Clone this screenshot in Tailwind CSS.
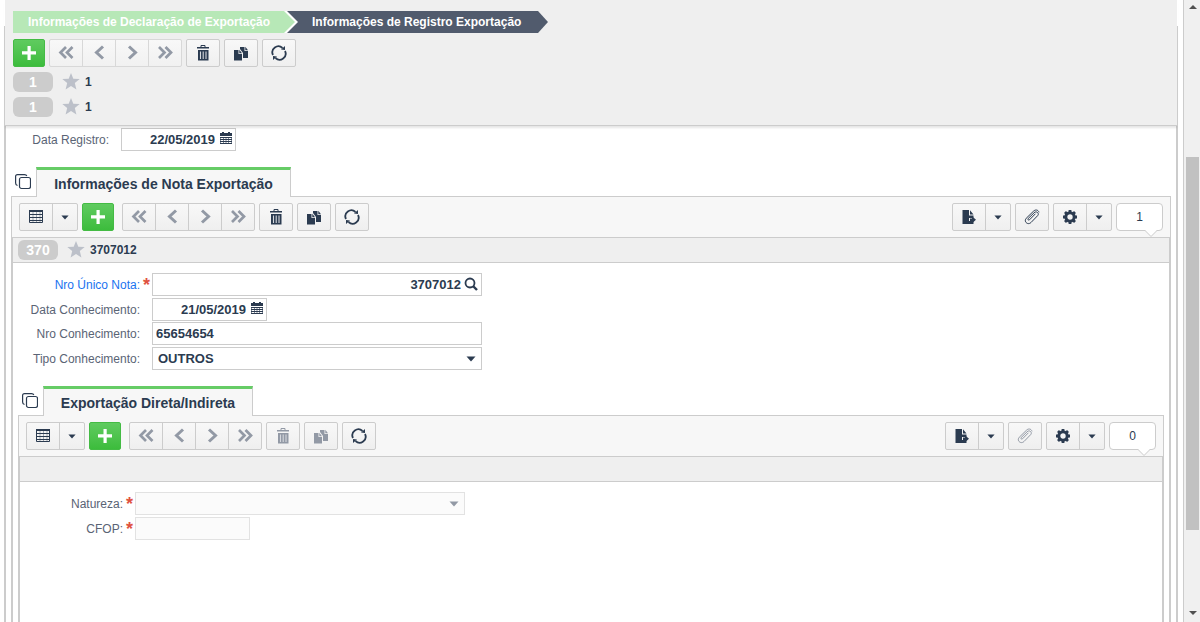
<!DOCTYPE html>
<html lang="pt-BR">
<head>
  <meta charset="UTF-8" />
  <meta name="viewport" content="width=device-width, initial-scale=1.0" />
  <title>Registro Exportação</title>
  <script src="https://cdn.jsdelivr.net/npm/@tailwindcss/browser@4"></script>
</head>
<body class="h-screen overflow-hidden flex bg-white font-['Liberation_Sans',Arial,sans-serif] text-xs text-[#2b3b50]">

  <!-- Icons -->
  <svg class="hidden">
    <symbol id="plus" viewBox="0 0 16 16"><path d="M6.500 1h3.200v5.300H15v3.200H9.700V15H6.500V9.500H1V6.300h5.500z" fill="currentColor"/></symbol>
    <symbol id="first" viewBox="0 0 16 16"><path d="M8 2 2.500 7.500 8 13M14.500 2 9 7.500l5.500 5.500" fill="none" stroke="currentColor" stroke-width="2.700"/></symbol>
    <symbol id="prev" viewBox="0 0 16 16"><path d="M12 1.500 5.500 7.500l6.500 6" fill="none" stroke="currentColor" stroke-width="3"/></symbol>
    <symbol id="next" viewBox="0 0 16 16"><path d="M5 1.500l6.500 6-6.500 6" fill="none" stroke="currentColor" stroke-width="3"/></symbol>
    <symbol id="last" viewBox="0 0 16 16"><path d="M2 2l5.500 5.500L2 13M8.500 2 14 7.500 8.500 13" fill="none" stroke="currentColor" stroke-width="2.700"/></symbol>
    <symbol id="trash" viewBox="0 0 16 16">
      <path d="M6 2.500V.5h4v2" fill="none" stroke="currentColor"/>
      <path d="M2 2h12v1.500H2zM3 5h10.500v10.500H3z" fill="currentColor"/>
      <path d="M5.500 6.500v7.500M8.200 6.500v7.500M11 6.500v7.500" stroke="#d5d8dd" stroke-width="1.100"/>
    </symbol>
    <symbol id="copy" viewBox="0 0 16 16">
      <path d="M1 5h4.500v4H9v6.500H1zM6.300 4.800 9 8.200H6.300z" fill="currentColor"/>
      <path d="M7 2h4.500v4H15v7h-5V8L7 4zM12.300 1.800 15 5.200h-2.700z" fill="currentColor"/>
    </symbol>
    <symbol id="refresh" viewBox="0 0 16 16">
      <path d="M2 10A6 6 0 0 1 11.500 3M14 6a6 6 0 0 1-9.500 7" fill="none" stroke="currentColor" stroke-width="1.800"/>
      <path d="M10 4.500 14 5V1zM6 11.500 2 11v4z" fill="currentColor"/>
    </symbol>
    <symbol id="star" viewBox="0 0 18 18"><path d="M9 0l2.300 5.700 6.400.4-4.900 4 1.600 6.400L9 13l-5.400 3.500 1.600-6.400-4.900-4 6.400-.4z" fill="#bcc0c9"/></symbol>
    <symbol id="grid" viewBox="0 0 16 16">
      <path d="M1.500 1.500h13v12h-13z" fill="none" stroke="currentColor"/>
      <path d="M1 1h14v2H1z" fill="currentColor"/>
      <path d="M1 5.500h14M1 8.500h14M1 11.500h14" stroke="currentColor"/>
      <path d="M5 3v10M8.500 3v10M12 3v10" stroke="currentColor" stroke-opacity=".4"/>
    </symbol>
    <symbol id="calendar" viewBox="0 0 14 14">
      <path d="M1 1h2V0h2v1h4V0h2v1h2v3H1z" fill="currentColor"/>
      <path d="M1 5.500h12M1 7.500h12M1 9.500h12M1 11.500h12" stroke="currentColor"/>
      <path d="M1.500 5v7M4.500 5v7M7 5v7M9.500 5v7M12.500 5v7" stroke="currentColor" stroke-opacity=".6"/>
    </symbol>
    <symbol id="caret" viewBox="0 0 10 6"><path d="M.5.500h9L5 5.500z" fill="currentColor"/></symbol>
    <symbol id="search" viewBox="0 0 14 14"><circle cx="6" cy="6" r="4.500" fill="none" stroke="currentColor" stroke-width="1.800"/><path d="M9 9l4 4" stroke="currentColor" stroke-width="2.400"/></symbol>
    <symbol id="export" viewBox="0 0 16 16">
      <path d="M1.500 1H8v5.500h4.500V9H8v3h4.500v3h-11zM9 1.200 12.500 5.500H9z" fill="currentColor"/>
      <path d="M9 9.500h2V7.300l4 3.500-4 3.500V12H9z" fill="currentColor"/>
    </symbol>
    <symbol id="clip" viewBox="0 0 16 16"><path d="M11.200 5 5.500 10.800c-.9.900-2.200-.3-1.300-1.300L10.500 3.400M10.500 3.400c1.900-1.900 5.200 1 3.200 3.200l-6.700 6.900c-3.200 3.100-7.600-1-4.800-4.200L9.500 2.200c1.600-1.700 4.600-1.800 5.400.8" fill="none" stroke="currentColor" stroke-linecap="round"/></symbol>
    <symbol id="gear" viewBox="0 0 16 16">
      <circle cx="8" cy="8" r="4.200" fill="none" stroke="currentColor" stroke-width="3"/>
      <path d="M8 1v3M8 12v3M1 8h3M12 8h3M3 3l2 2M11 11l2 2M13 3l-2 2M5 11l-2 2" stroke="currentColor" stroke-width="2.800"/>
    </symbol>
    <symbol id="windows" viewBox="0 0 16 16">
      <rect x="4.500" y="3.500" width="11" height="11" rx="2" fill="none" stroke="currentColor" stroke-width="1.200"/>
      <path d="M2.500 11.500C1 11 .6 10.500.6 9V2.500C.6 1.300 1.300.6 2.500.6h7c1.300 0 2 .4 2.300 1.400" fill="none" stroke="currentColor" stroke-width="1.200"/>
    </symbol>
  </svg>

  <div class="flex-1 min-w-0 h-full pl-1 pr-[5px] flex flex-col">

    <!-- Fixed header -->
    <header class="relative z-10 shrink-0 h-[126px] pt-[11px] pl-2 bg-[#efefef] border-x border-b border-[#ccc] shadow-[0_3px_2px_-1px_rgba(0,0,0,0.1)] before:absolute before:-inset-x-px before:top-0 before:h-[26px] before:border-x before:border-white">
      <nav class="relative flex h-[22px] leading-[22px] text-white font-bold">
        <div class="z-10 w-[285px] bg-white [clip-path:polygon(0_0,274px_0,100%_50%,274px_100%,0_100%)]">
          <a href="#" class="block w-[282px] h-full pl-[15px] bg-[#b7e8b7] whitespace-nowrap [clip-path:polygon(0_0,271px_0,100%_50%,271px_100%,0_100%)]">Informações de Declaração de Exportação</a>
        </div>
        <a href="#" class="-ml-[11px] w-[261px] pl-[25px] bg-[#515b6d] whitespace-nowrap [clip-path:polygon(0_0,251px_0,100%_50%,251px_100%,0_100%)]">Informações de Registro Exportação</a>
      </nav>

      <div class="relative flex gap-1 mt-[6px]">
        <button aria-label="Novo" class="w-8 h-7 flex items-center justify-center rounded-xs text-white border border-[#44bb44] bg-linear-to-b from-[#5fcb5f] to-[#3cbc3c]"><svg class="size-4"><use href="#plus"/></svg></button>
        <div class="flex h-7 border border-[#d8d8d8] rounded-xs bg-linear-to-b from-[#f8f8f8] to-[#f1f1f1] divide-x divide-[#d8d8d8] text-[#9299a5]">
          <button aria-label="Primeiro" class="w-[33px] flex items-center justify-center"><svg class="size-4"><use href="#first"/></svg></button>
          <button aria-label="Anterior" class="w-[33px] flex items-center justify-center"><svg class="size-4"><use href="#prev"/></svg></button>
          <button aria-label="Próximo" class="w-[33px] flex items-center justify-center"><svg class="size-4"><use href="#next"/></svg></button>
          <button aria-label="Último" class="w-8 flex items-center justify-center"><svg class="size-4"><use href="#last"/></svg></button>
        </div>
        <button aria-label="Excluir" class="w-[34px] h-7 flex items-center justify-center rounded-xs border border-[#ccc] bg-linear-to-b from-[#f8f8f8] to-[#efefef]"><svg class="size-4"><use href="#trash"/></svg></button>
        <button aria-label="Duplicar" class="w-[34px] h-7 flex items-center justify-center rounded-xs border border-[#ccc] bg-linear-to-b from-[#f8f8f8] to-[#efefef]"><svg class="size-4"><use href="#copy"/></svg></button>
        <button aria-label="Atualizar" class="w-[34px] h-7 flex items-center justify-center rounded-xs border border-[#ccc] bg-linear-to-b from-[#f8f8f8] to-[#efefef]"><svg class="size-4"><use href="#refresh"/></svg></button>
      </div>

      <div class="relative flex flex-col gap-[5px] mt-[5px] font-bold">
        <div class="flex items-center h-5">
          <span class="w-10 h-5 leading-5 rounded-md bg-[#ccc] text-white text-center text-sm">1</span>
          <svg class="size-[18px] ml-[9px] mr-[5px]"><use href="#star"/></svg>1
        </div>
        <div class="flex items-center h-5">
          <span class="w-10 h-5 leading-5 rounded-md bg-[#ccc] text-white text-center text-sm">1</span>
          <svg class="size-[18px] ml-[9px] mr-[5px]"><use href="#star"/></svg>1
        </div>
      </div>
    </header>

    <main class="flex-1 min-h-0 flex flex-col border-x-2 border-[#ccc] px-[5px] pt-[2px]">
      <div class="flex items-center">
        <label for="dataRegistro" class="w-[98px] mr-3 text-right text-[#5a6475]">Data Registro:</label>
        <div class="relative w-[115px]">
          <input id="dataRegistro" value="22/05/2019" class="block w-full h-[23px] pr-5 border border-[#ccc] text-right text-[13px] font-bold" />
          <svg class="absolute right-[3px] top-1 size-[14px]"><use href="#calendar"/></svg>
        </div>
      </div>

      <!-- Nota Exportação -->
      <section class="flex-1 min-h-0 mt-4 flex flex-col">
        <div class="relative z-10 -mb-px flex pl-1">
          <svg class="size-4 mt-[7px] mr-[5px] shrink-0"><use href="#windows"/></svg>
          <h2 class="h-[30px] w-[255px] text-center leading-[29px] text-sm font-bold whitespace-nowrap bg-[#f7f7f7] border-x border-[#ccc] border-t-3 border-t-[#66cc66]">Informações de Nota Exportação</h2>
        </div>
        <div class="shrink-0 flex justify-between py-[6px] px-[7px] bg-[#f7f7f7] border-x border-t border-[#ccc]">
          <div class="flex gap-1">
            <div class="flex h-7 border border-[#ccc] rounded-xs bg-linear-to-b from-[#f8f8f8] to-[#efefef] divide-x divide-[#ccc]">
              <button aria-label="Modo grade" class="w-[33px] flex items-center justify-center"><svg class="size-4"><use href="#grid"/></svg></button>
              <button aria-label="Opções da grade" class="w-6 flex items-center justify-center"><svg class="w-2 h-[5px]"><use href="#caret"/></svg></button>
            </div>
            <button aria-label="Novo" class="w-8 h-7 mr-1 flex items-center justify-center rounded-xs text-white border border-[#44bb44] bg-linear-to-b from-[#5fcb5f] to-[#3cbc3c]"><svg class="size-4"><use href="#plus"/></svg></button>
            <div class="flex h-7 border border-[#ccc] rounded-xs bg-linear-to-b from-[#f8f8f8] to-[#efefef] divide-x divide-[#ccc] text-[#9299a5]">
              <button aria-label="Primeiro" class="w-[33px] flex items-center justify-center"><svg class="size-4"><use href="#first"/></svg></button>
              <button aria-label="Anterior" class="w-[33px] flex items-center justify-center"><svg class="size-4"><use href="#prev"/></svg></button>
              <button aria-label="Próximo" class="w-[33px] flex items-center justify-center"><svg class="size-4"><use href="#next"/></svg></button>
              <button aria-label="Último" class="w-8 flex items-center justify-center"><svg class="size-4"><use href="#last"/></svg></button>
            </div>
            <button aria-label="Excluir" class="w-[34px] h-7 flex items-center justify-center rounded-xs border border-[#ccc] bg-linear-to-b from-[#f8f8f8] to-[#efefef]"><svg class="size-4"><use href="#trash"/></svg></button>
            <button aria-label="Duplicar" class="w-[34px] h-7 flex items-center justify-center rounded-xs border border-[#ccc] bg-linear-to-b from-[#f8f8f8] to-[#efefef]"><svg class="size-4"><use href="#copy"/></svg></button>
            <button aria-label="Atualizar" class="w-[34px] h-7 flex items-center justify-center rounded-xs border border-[#ccc] bg-linear-to-b from-[#f8f8f8] to-[#efefef]"><svg class="size-4"><use href="#refresh"/></svg></button>
          </div>
          <div class="flex gap-1">
            <div class="flex h-7 border border-[#ccc] rounded-xs bg-linear-to-b from-[#f8f8f8] to-[#efefef] divide-x divide-[#ccc]">
              <button aria-label="Exportar" class="w-[33px] flex items-center justify-center"><svg class="size-4"><use href="#export"/></svg></button>
              <button aria-label="Opções de exportação" class="w-6 flex items-center justify-center"><svg class="w-2 h-[5px]"><use href="#caret"/></svg></button>
            </div>
            <button aria-label="Anexos" class="w-[34px] h-7 flex items-center justify-center rounded-xs border border-[#ccc] bg-linear-to-b from-[#f8f8f8] to-[#efefef]"><svg class="size-4"><use href="#clip"/></svg></button>
            <div class="flex h-7 border border-[#ccc] rounded-xs bg-linear-to-b from-[#f8f8f8] to-[#efefef] divide-x divide-[#ccc]">
              <button aria-label="Configurações" class="w-[33px] flex items-center justify-center"><svg class="size-4"><use href="#gear"/></svg></button>
              <button aria-label="Mais opções" class="w-6 flex items-center justify-center"><svg class="w-2 h-[5px]"><use href="#caret"/></svg></button>
            </div>
            <div class="relative w-[47px] h-7 leading-[26px] text-center bg-white border border-[#ccc] rounded-sm">1
              <svg class="absolute right-1 top-[25px] w-[14px] h-2" viewBox="0 0 14 8"><path d="M1 0v1l6 6 6-6V0z" fill="#fff"/><path d="M1 1.500l6 6 6-6" fill="none" stroke="#ccc"/></svg>
            </div>
          </div>
        </div>

        <div class="flex-1 min-h-0 flex flex-col border-x-2 border-t border-[#ccc]">
          <div class="shrink-0 flex items-center h-[25px] pl-[5px] bg-[#efefef] border-b border-[#ccc] font-bold">
            <span class="w-10 h-5 leading-5 rounded-md bg-[#ccc] text-white text-center text-sm">370</span>
            <svg class="size-[18px] ml-[9px] mr-[5px]"><use href="#star"/></svg>3707012
          </div>

          <form class="shrink-0 pt-[10px] flex flex-col gap-[2px] text-[#5a6475]">
            <div class="flex items-center">
              <label for="nroNota" class="w-[127px] text-right text-[#1a73f0]">Nro Único Nota:</label>
              <span class="w-3 h-[23px] pl-[3px] text-lg leading-6 font-bold text-[#e0523f]">*</span>
              <div class="relative w-[330px]">
                <input id="nroNota" value="3707012" class="block w-full h-[23px] pr-5 border border-[#ccc] text-right text-[13px] font-bold text-[#2b3b50]" />
                <svg class="absolute right-1 top-1 size-[14px] text-[#2b3b50]"><use href="#search"/></svg>
              </div>
            </div>
            <div class="flex items-center">
              <label for="dataConhecimento" class="w-[127px] mr-3 text-right">Data Conhecimento:</label>
              <div class="relative w-[115px]">
                <input id="dataConhecimento" value="21/05/2019" class="block w-full h-[23px] pr-5 border border-[#ccc] text-right text-[13px] font-bold text-[#2b3b50]" />
                <svg class="absolute right-[3px] top-1 size-[14px] text-[#2b3b50]"><use href="#calendar"/></svg>
              </div>
            </div>
            <div class="flex items-center -mt-px">
              <label for="nroConhecimento" class="w-[127px] mr-3 text-right">Nro Conhecimento:</label>
              <input id="nroConhecimento" value="65654654" class="w-[330px] h-[23px] px-[3px] border border-[#ccc] text-[13px] font-bold text-[#2b3b50]" />
            </div>
            <div class="flex items-center">
              <label for="tipoConhecimento" class="w-[127px] mr-3 text-right">Tipo Conhecimento:</label>
              <div class="relative w-[330px] text-[#2b3b50]">
                <select id="tipoConhecimento" class="block appearance-none w-full h-[23px] px-[5px] border border-[#ccc] text-[13px] font-bold"><option>OUTROS</option></select>
                <svg class="absolute right-[6px] top-[9px] w-[10px] h-[6px] pointer-events-none"><use href="#caret"/></svg>
              </div>
            </div>
          </form>

          <!-- Exportação Direta/Indireta -->
          <section class="flex-1 min-h-0 mt-4 mx-[5px] flex flex-col">
            <div class="relative z-10 -mb-px flex pl-1">
              <svg class="size-4 mt-[7px] mr-[5px] shrink-0"><use href="#windows"/></svg>
              <h2 class="h-[30px] w-[210px] text-center leading-[29px] text-sm font-bold whitespace-nowrap bg-[#f7f7f7] border-x border-[#ccc] border-t-3 border-t-[#66cc66]">Exportação Direta/Indireta</h2>
            </div>
            <div class="shrink-0 flex justify-between py-[6px] px-[7px] bg-[#f7f7f7] border-x border-t border-[#ccc]">
              <div class="flex gap-1">
                <div class="flex h-7 border border-[#ccc] rounded-xs bg-linear-to-b from-[#f8f8f8] to-[#efefef] divide-x divide-[#ccc]">
                  <button aria-label="Modo grade" class="w-[33px] flex items-center justify-center"><svg class="size-4"><use href="#grid"/></svg></button>
                  <button aria-label="Opções da grade" class="w-6 flex items-center justify-center"><svg class="w-2 h-[5px]"><use href="#caret"/></svg></button>
                </div>
                <button aria-label="Novo" class="w-8 h-7 mr-1 flex items-center justify-center rounded-xs text-white border border-[#44bb44] bg-linear-to-b from-[#5fcb5f] to-[#3cbc3c]"><svg class="size-4"><use href="#plus"/></svg></button>
                <div class="flex h-7 border border-[#ccc] rounded-xs bg-linear-to-b from-[#f8f8f8] to-[#efefef] divide-x divide-[#ccc] text-[#9299a5]">
                  <button aria-label="Primeiro" class="w-[33px] flex items-center justify-center"><svg class="size-4"><use href="#first"/></svg></button>
                  <button aria-label="Anterior" class="w-[33px] flex items-center justify-center"><svg class="size-4"><use href="#prev"/></svg></button>
                  <button aria-label="Próximo" class="w-[33px] flex items-center justify-center"><svg class="size-4"><use href="#next"/></svg></button>
                  <button aria-label="Último" class="w-8 flex items-center justify-center"><svg class="size-4"><use href="#last"/></svg></button>
                </div>
                <button disabled aria-label="Excluir" class="w-[34px] h-7 flex items-center justify-center rounded-xs border border-[#ccc] bg-linear-to-b from-[#f8f8f8] to-[#efefef] text-[#9299a5]"><svg class="size-4"><use href="#trash"/></svg></button>
                <button disabled aria-label="Duplicar" class="w-[34px] h-7 flex items-center justify-center rounded-xs border border-[#ccc] bg-linear-to-b from-[#f8f8f8] to-[#efefef] text-[#9299a5]"><svg class="size-4"><use href="#copy"/></svg></button>
                <button aria-label="Atualizar" class="w-[34px] h-7 flex items-center justify-center rounded-xs border border-[#ccc] bg-linear-to-b from-[#f8f8f8] to-[#efefef]"><svg class="size-4"><use href="#refresh"/></svg></button>
              </div>
              <div class="flex gap-1">
                <div class="flex h-7 border border-[#ccc] rounded-xs bg-linear-to-b from-[#f8f8f8] to-[#efefef] divide-x divide-[#ccc]">
                  <button aria-label="Exportar" class="w-[33px] flex items-center justify-center"><svg class="size-4"><use href="#export"/></svg></button>
                  <button aria-label="Opções de exportação" class="w-6 flex items-center justify-center"><svg class="w-2 h-[5px]"><use href="#caret"/></svg></button>
                </div>
                <button disabled aria-label="Anexos" class="w-[34px] h-7 flex items-center justify-center rounded-xs border border-[#ccc] bg-linear-to-b from-[#f8f8f8] to-[#efefef] text-[#9299a5]"><svg class="size-4"><use href="#clip"/></svg></button>
                <div class="flex h-7 border border-[#ccc] rounded-xs bg-linear-to-b from-[#f8f8f8] to-[#efefef] divide-x divide-[#ccc]">
                  <button aria-label="Configurações" class="w-[33px] flex items-center justify-center"><svg class="size-4"><use href="#gear"/></svg></button>
                  <button aria-label="Mais opções" class="w-6 flex items-center justify-center"><svg class="w-2 h-[5px]"><use href="#caret"/></svg></button>
                </div>
                <div class="relative w-[47px] h-7 leading-[26px] text-center bg-white border border-[#ccc] rounded-sm">0
                  <svg class="absolute right-1 top-[25px] w-[14px] h-2" viewBox="0 0 14 8"><path d="M1 0v1l6 6 6-6V0z" fill="#fff"/><path d="M1 1.500l6 6 6-6" fill="none" stroke="#ccc"/></svg>
                </div>
              </div>
            </div>

            <div class="flex-1 min-h-0 border-x-2 border-t border-[#ccc]">
              <div class="h-[25px] bg-[#efefef] border-b border-[#ccc]"></div>
              <form class="pt-[10px] flex flex-col gap-[2px] text-[#5a6475]">
                <div class="flex items-center">
                  <label for="natureza" class="w-[103px] text-right">Natureza:</label>
                  <span class="w-3 h-[23px] pl-[3px] text-lg leading-6 font-bold text-[#e0523f]">*</span>
                  <div class="relative w-[330px]">
                    <select id="natureza" disabled class="block appearance-none w-full h-[23px] px-[5px] border border-[#e2e2e2] bg-[#fbfbfb]"><option></option></select>
                    <svg class="absolute right-[6px] top-[9px] w-[10px] h-[6px] text-[#9299a5] pointer-events-none"><use href="#caret"/></svg>
                  </div>
                </div>
                <div class="flex items-center">
                  <label for="cfop" class="w-[103px] text-right">CFOP:</label>
                  <span class="w-3 h-[23px] pl-[3px] text-lg leading-6 font-bold text-[#e0523f]">*</span>
                  <input id="cfop" disabled class="w-[115px] h-[23px] border border-[#e2e2e2] bg-[#fbfbfb]" />
                </div>
              </form>
            </div>
          </section>
        </div>
      </section>
    </main>
  </div>

  <!-- Scrollbar -->
  <div class="w-[17px] h-full pt-1 pb-[6px] pl-[2px] pr-px flex flex-col items-center bg-[#f0f0f0] border-l border-[#ccc] text-[#505050]">
    <svg class="w-2 h-[6px] shrink-0" viewBox="0 0 8 6"><path d="M0 5h8L4 1z" fill="currentColor"/></svg>
    <div class="basis-[147px] shrink"></div>
    <div class="w-full h-[373px] shrink-0 bg-[#c1c1c1]"></div>
    <svg class="w-2 h-[6px] shrink-0 mt-auto" viewBox="0 0 8 6"><path d="M0 1h8L4 5z" fill="currentColor"/></svg>
  </div>
</body>
</html>
